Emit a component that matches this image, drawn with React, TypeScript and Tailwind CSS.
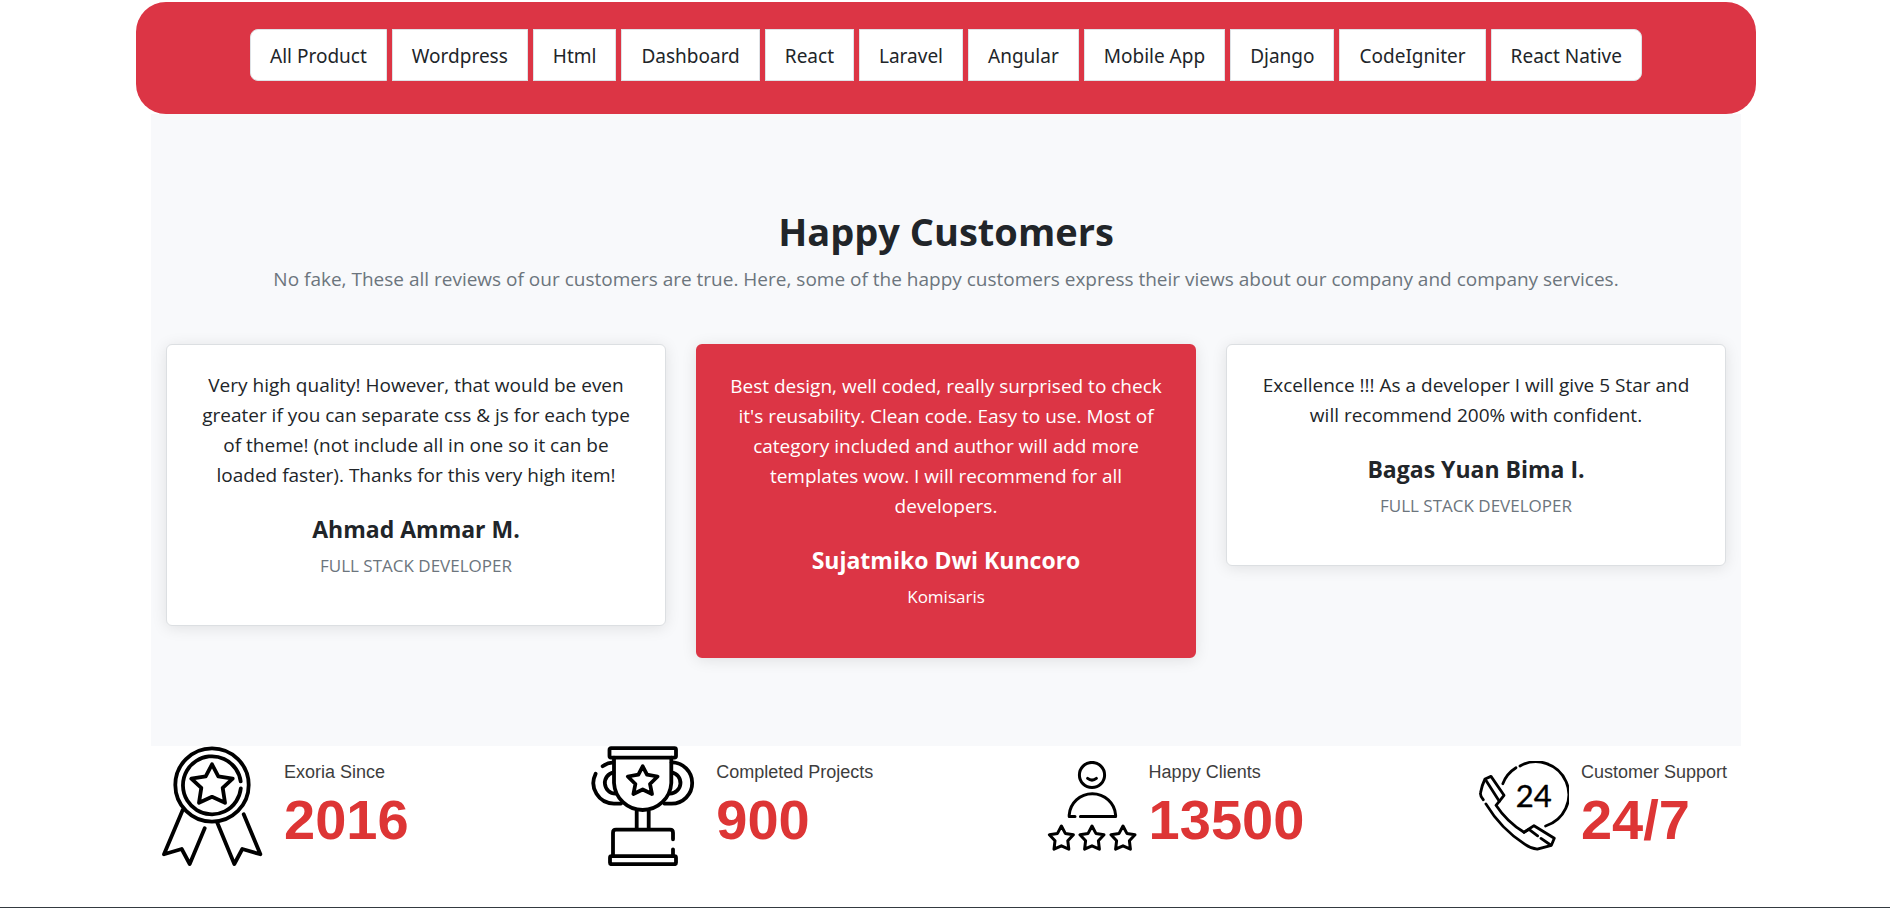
import type { ReactNode } from "react";

const categories = [
  "All Product",
  "Wordpress",
  "Html",
  "Dashboard",
  "React",
  "Laravel",
  "Angular",
  "Mobile App",
  "Django",
  "CodeIgniter",
  "React Native",
];

type Review = { quote: string; name: string; role: string; featured?: boolean };

const reviews: Review[] = [
  {
    quote:
      "Very high quality! However, that would be even greater if you can separate css & js for each type of theme! (not include all in one so it can be loaded faster). Thanks for this very high item!",
    name: "Ahmad Ammar M.",
    role: "FULL STACK DEVELOPER",
  },
  {
    quote:
      "Best design, well coded, really surprised to check it's reusability. Clean code. Easy to use. Most of category included and author will add more templates wow. I will recommend for all developers.",
    name: "Sujatmiko Dwi Kuncoro",
    role: "Komisaris",
    featured: true,
  },
  {
    quote: "Excellence !!! As a developer I will give 5 Star and will recommend 200% with confident.",
    name: "Bagas Yuan Bima I.",
    role: "FULL STACK DEVELOPER",
  },
];

function Icon({ size, stroke, children }: { size: 90 | 120; stroke: number; children: ReactNode }) {
  return (
    <svg
      viewBox={`0 0 ${size} ${size}`}
      className={size === 120 ? "size-[120px]" : "size-[90px]"}
      fill="none"
      stroke="#000"
      strokeWidth={stroke}
      strokeLinecap="round"
      strokeLinejoin="round"
      aria-hidden="true"
    >
      {children}
    </svg>
  );
}

function MedalIcon() {
  return (
    <Icon size={120} stroke={3.8}>
      <circle cx="60" cy="39" r="36.7" />
      <path d="M88.8 42.4A29 29 0 1 1 88.7 35.4" />
      <path d="M60 18.3 66.3 30.3 80.7 32.7 70.7 41.9 73 56.8 60 50.8 47 56.8 49.3 41.9 39.3 32.7 53.7 30.3Z" />
      <path d="M30.7 64 12 108.3 29.7 103 37.7 118 52.7 82.3" />
      <path d="M65.3 76.7 82.3 118 90.3 103 108.4 108.3 91.7 68.3" />
    </Icon>
  );
}

function TrophyIcon() {
  return (
    <Icon size={120} stroke={3.8}>
      <rect x="25.5" y="2.2" width="66.5" height="9.4" rx="1.5" />
      <path d="M30 11.6V37A28.7 28.7 0 0 0 87.3 37V11.6" />
      <path d="M29.3 16.4A20.6 20.6 0 0 0 18.6 20.2M11.6 27.8A20.6 20.6 0 0 0 30 57.6H37" />
      <path d="M87.6 16.4A20.6 20.6 0 0 1 87.6 57.6H80.4" />
      <path d="M29.5 26.4A10.7 10.7 0 0 0 31.5 47.6M87.8 26.4A10.7 10.7 0 0 1 86 47.6" />
      <path d="M58.7 20.3 63 28.7 73.6 30.5 66 38 68 48 58.7 43.5 49.4 48 51.4 38 43.8 30.5 54.4 28.7Z" />
      <path d="M52.7 65V83M64.7 65V83" />
      <path d="M29 110V86.7Q29 83.7 32 83.7H86Q89 83.7 89 86.7V93.3M89 103.3V110" />
      <rect x="26" y="110.2" width="66" height="8" rx="1.5" />
    </Icon>
  );
}

function ClientIcon() {
  return (
    <Icon size={90} stroke={3}>
      <circle cx="45" cy="14" r="12.6" />
      <path d="M40.6 17.4Q45 20.8 49.4 17.4" />
      <path d="M28 55.6H22.2V54C23 42 33 32.7 45.3 32.7S67.8 42 68.6 54V55.6H33.4" />
      {[14.4, 45, 76].map((x) => (
        <path
          key={x}
          transform={`translate(${x} 64)`}
          d="M0 1 3.9 8.4 12 9.8 6.4 15.8 7.4 24.2 0 20.8-7.4 24.2-6.4 15.8-12 9.8-3.9 8.4Z"
        />
      ))}
    </Icon>
  );
}

function SupportIcon() {
  return (
    <Icon size={90} stroke={2.8}>
      <path d="M41 5A32.8 32.8 0 1 1 66.6 65" />
      <path d="M23.8 22.7A32.8 32.8 0 0 1 37 6.8" />
      <path d="M4.3 38.7Q.8 35 1.6 31.5 3 24 6 18L12 15.4 25 34.3 20.3 40.3 17 44.3Q28 61 45 71.3L55 64.7 75.3 77.3 72.4 84.3 58.3 88.2Q52 87.6 46 83.4 22 68 6.9 42.9" />
      <path d="M6.4 18.4 20.3 40.3M45 71.3 50 68.4 58.6 74.8M62 77.4 71.6 84" />
      <text
        x="54.8"
        y="46.4"
        textAnchor="middle"
        fill="#000"
        strokeWidth="0.4"
        className="font-['Lato',sans-serif] text-[31px]"
      >
        24
      </text>
    </Icon>
  );
}

const stats = [
  { label: "Exoria Since", value: "2016", icon: <MedalIcon /> },
  { label: "Completed Projects", value: "900", icon: <TrophyIcon /> },
  { label: "Happy Clients", value: "13500", icon: <ClientIcon /> },
  { label: "Customer Support", value: "24/7", icon: <SupportIcon /> },
];

function CategoryNav() {
  return (
    <nav
      aria-label="Product categories"
      className="mx-auto flex w-full max-w-[1620px] justify-center rounded-[30px] bg-[#dc3545] pt-[27px] pb-[33px] font-['Noto_Sans',sans-serif]"
    >
      <ul className="flex gap-[5px]">
        {categories.map((name) => (
          <li key={name} className="group">
            <button
              type="button"
              className="block cursor-pointer border border-[#dee2e6] bg-white px-[19px] pt-[11px] pb-[9px] text-[19px] leading-[30px] whitespace-nowrap group-first:rounded-l-lg group-last:rounded-r-lg"
            >
              {name}
            </button>
          </li>
        ))}
      </ul>
    </nav>
  );
}

function ReviewCard({ quote, name, role, featured }: Review) {
  return (
    <article
      className={
        featured
          ? "rounded-md border-2 border-[#dc3545] bg-[#dc3545] px-7 pt-[25px] pb-[45px] text-center text-white shadow-[0_2px_15px_rgba(0,0,0,0.1)]"
          : "rounded-md border border-[#dcdfe2] bg-white px-7 pt-[25px] pb-[45px] text-center shadow-[0_2px_15px_rgba(0,0,0,0.1)]"
      }
    >
      <p className="text-[19px] leading-[30px]">{quote}</p>
      <h3 className="mt-6 text-[23px] leading-[30px] font-bold">{name}</h3>
      <p className={featured ? "mt-2 text-[17px] leading-[28px]" : "mt-2 text-[17px] leading-[28px] text-[#6c757d]"}>
        {role}
      </p>
    </article>
  );
}

export default function App() {
  return (
    <div className="bg-white pt-0.5 font-['Open_Sans',sans-serif] text-[#212529]">
      <div className="pl-0.5">
        <CategoryNav />
        <main className="mx-auto w-full max-w-[1590px]">
          <section className="bg-[#f8f9fb] px-[15px] pt-[93px] pb-[88px]">
            <h2 className="text-center text-[38px] leading-[48px] font-bold">Happy Customers</h2>
            <p className="mt-[9px] text-center text-[19px] leading-[30px] text-[#6c757d]">
              No fake, These all reviews of our customers are true. Here, some of the happy customers express their
              views about our company and company services.
            </p>
            <div className="mt-[50px] grid grid-cols-3 items-start gap-[30px]">
              {reviews.map((review) => (
                <ReviewCard key={review.name} {...review} />
              ))}
            </div>
          </section>
          <section className="grid grid-cols-[1fr_1fr_1fr_auto] pr-[14px] pb-[41px] pl-px font-['Liberation_Sans',sans-serif]">
            {stats.map(({ label, value, icon }) => (
              <div key={label} className="flex gap-3">
                <div className="flex size-[120px] shrink-0 items-center justify-end">{icon}</div>
                <div className="pt-3">
                  <p className="text-[18px] leading-[28px] text-[#3d3d3d]">{label}</p>
                  <p className="text-[56px] leading-[68px] font-bold text-[#dd3535]">{value}</p>
                </div>
              </div>
            ))}
          </section>
        </main>
      </div>
      <footer className="h-px bg-[#343a40]" />
    </div>
  );
}
